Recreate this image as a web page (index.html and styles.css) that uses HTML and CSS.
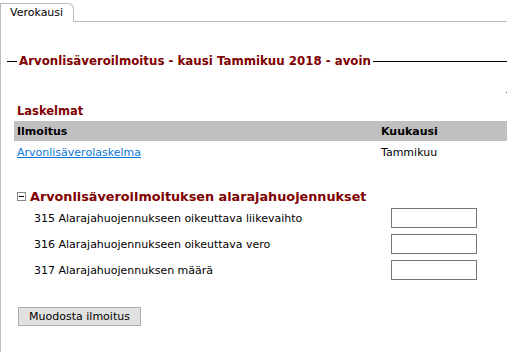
FILE: index.html
```html
<!DOCTYPE html>
<html lang="fi">
<head>
    <meta charset="UTF-8">
    <title>Verokausi</title>
    <link rel="stylesheet" href="styles.css">
</head>
<body>
    <div class="tabs">
        <div class="tab">Verokausi</div>
    </div>
    <div class="panel">
        <fieldset class="period">
            <legend>Arvonlisäveroilmoitus - kausi Tammikuu 2018 - avoin</legend>
        </fieldset>
        <span class="dot"></span>

        <h2 class="section-title calc-title">Laskelmat</h2>
        <table class="calc-table">
            <thead>
                <tr>
                    <th class="col-name">Ilmoitus</th>
                    <th>Kuukausi</th>
                </tr>
            </thead>
            <tbody>
                <tr>
                    <td><a href="#">Arvonlisäverolaskelma</a></td>
                    <td>Tammikuu</td>
                </tr>
            </tbody>
        </table>

        <h2 class="section-title toggle"><span class="collapse-box"></span>Arvonlisäveroilmoituksen alarajahuojennukset</h2>
        <div class="relief-rows">
            <div class="relief-row">
                <label for="f315">315 Alarajahuojennukseen oikeuttava liikevaihto</label>
                <input type="text" id="f315">
            </div>
            <div class="relief-row">
                <label for="f316">316 Alarajahuojennukseen oikeuttava vero</label>
                <input type="text" id="f316">
            </div>
            <div class="relief-row">
                <label for="f317">317 Alarajahuojennuksen määrä</label>
                <input type="text" id="f317">
            </div>
        </div>

        <button type="button" class="submit-btn">Muodosta ilmoitus</button>
    </div>
</body>
</html>
```

FILE: styles.css
```css
body {
  margin: 0;
  font-family: "DejaVu Sans", Verdana, sans-serif;
  font-size: 11px;
  color: #000;
  background-color: #fff;
}

.tabs {
  display: flex;
  padding-top: 3px;
  border-bottom: 1px solid #bbb;
}

.tab {
  width: 63px;
  height: 18px;
  padding-left: 9px;
  line-height: 18px;
  border: 1px solid #bbb;
  border-bottom: none;
  border-top-right-radius: 6px;
  margin-bottom: -1px;
  background-color: #fff;
}

.panel {
  position: relative;
  display: flow-root;
  box-sizing: border-box;
  border-left: 1px solid #bbb;
  height: 330px;
  padding-left: 16px;
}

.period {
  margin: 32px 0 0 -10px;
  padding: 0;
  border: none;
  border-top: 1px solid #000;
}

.period legend {
  padding: 0 2px;
  margin-left: 10px;
  color: #800000;
  font-weight: bold;
  font-size: 11.8px;
}

.dot {
  position: absolute;
  right: 0;
  top: 70px;
  width: 1px;
  height: 1px;
  background-color: #0066cc;
}

.section-title {
  margin: 0;
  color: #800000;
  font-weight: bold;
}

.calc-title {
  margin-top: 36px;
  font-size: 11.5px;
}

.calc-table {
  width: calc(100% + 3px);
  margin-left: -3px;
  margin-top: 3px;
  border-collapse: collapse;
}

.calc-table th {
  background-color: #c0c0c0;
  text-align: left;
  font-weight: bold;
  height: 20px;
  padding: 0 3px;
}

.calc-table th.col-name {
  width: 358px;
}

.calc-table td {
  height: 22px;
  padding: 0 3px;
}

.calc-table a {
  color: #0a74da;
}

.toggle {
  display: flex;
  align-items: center;
  margin-top: 26px;
  font-size: 12.8px;
}

.collapse-box {
  display: inline-block;
  box-sizing: border-box;
  width: 9px;
  height: 9px;
  border: 1px solid #888;
  margin-right: 4px;
  position: relative;
}

.collapse-box::after {
  content: "";
  position: absolute;
  left: 1px;
  right: 1px;
  top: 3px;
  height: 1px;
  background-color: #000;
}

.relief-rows {
  display: flex;
  flex-direction: column;
  gap: 6px;
  margin-top: 4px;
  padding-left: 17px;
}

.relief-row {
  display: flex;
  align-items: center;
}

.relief-row label {
  width: 357px;
}

.relief-row input {
  box-sizing: border-box;
  width: 86px;
  height: 20px;
  border: 1px solid #767676;
  margin: 0;
}

.submit-btn {
  margin-top: 27px;
  margin-left: 1px;
  width: 123px;
  height: 19px;
  padding: 0;
  font-family: "DejaVu Sans", Verdana, sans-serif;
  font-size: 11px;
  color: #000;
  background-color: #e1e1e1;
  border: 1px solid #adadad;
}
```
